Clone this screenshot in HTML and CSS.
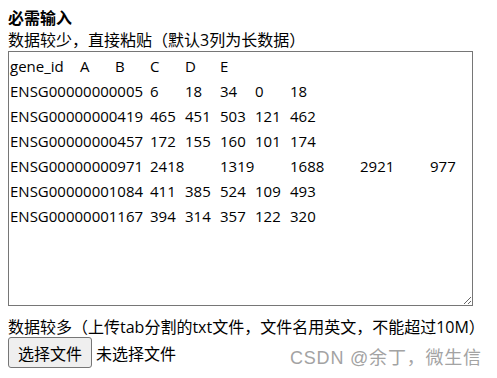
FILE: index.html
```html
<!DOCTYPE html>
<html lang="zh-CN">
<head>
<meta charset="utf-8">
<title>必需输入</title>
<link rel="stylesheet" href="styles.css">
</head>
<body>
<div class="form">
  <div class="title">必需输入</div>
  <div class="hint">数据较少，直接粘贴（默认3列为长数据）</div>
  <textarea class="data" spellcheck="false">gene_id	A	B	C	D	E
ENSG00000000005	6	18	34	0	18
ENSG00000000419	465	451	503	121	462
ENSG00000000457	172	155	160	101	174
ENSG00000000971	2418	1319	1688	2921	977
ENSG00000001084	411	385	524	109	493
ENSG00000001167	394	314	357	122	320</textarea>
  <div class="hint more">数据较多（上传tab分割的txt文件，文件名用英文，不能超过10M）</div>
  <div class="file-row">
    <button class="file-btn" type="button">选择文件</button>
    <span class="file-status">未选择文件</span>
  </div>
</div>
<div class="watermark">CSDN @余丁，微生信</div>
</body>
</html>
```
FILE: styles.css
```css
html, body {
  margin: 0;
  padding: 0;
  background: #fff;
}
body {
  padding: 8px;
  font-family: "Open Sans", "Noto Sans CJK SC", sans-serif;
  font-size: 16px;
  color: #000;
}
.form {
  display: flex;
  flex-direction: column;
  align-items: flex-start;
}
.title {
  font-weight: bold;
  line-height: 21px;
}
.hint {
  line-height: 22px;
}
.data {
  display: block;
  box-sizing: border-box;
  width: 465px;
  height: 255px;
  margin: 0;
  padding: 2px 1px;
  border: 1px solid #767676;
  font-family: "Open Sans", sans-serif;
  font-size: 15px;
  line-height: 25px;
  tab-size: 35px;
  -moz-tab-size: 35px;
  color: #000;
  resize: both;
  outline: none;
  overflow: hidden;
}
.more {
  margin-top: 11px;
  line-height: 20px;
}
.file-row {
  display: flex;
  align-items: center;
  gap: 4px;
}
.file-btn {
  box-sizing: border-box;
  height: 31px;
  width: 84px;
  padding: 0;
  margin: 0;
  font-family: "Noto Sans CJK SC", sans-serif;
  font-size: 16px;
  color: #000;
  background: #efefef;
  border: 1px solid #767676;
  border-radius: 3px;
}
.file-status {
  font-family: "Noto Sans CJK SC", sans-serif;
  font-size: 16px;
}
.watermark {
  position: absolute;
  left: 290px;
  top: 346px;
  font-family: "Liberation Sans", "Noto Sans CJK SC", sans-serif;
  font-size: 18px;
  line-height: 24px;
  color: #a3a3a3;
  letter-spacing: 0.8px;
  white-space: nowrap;
}
```
